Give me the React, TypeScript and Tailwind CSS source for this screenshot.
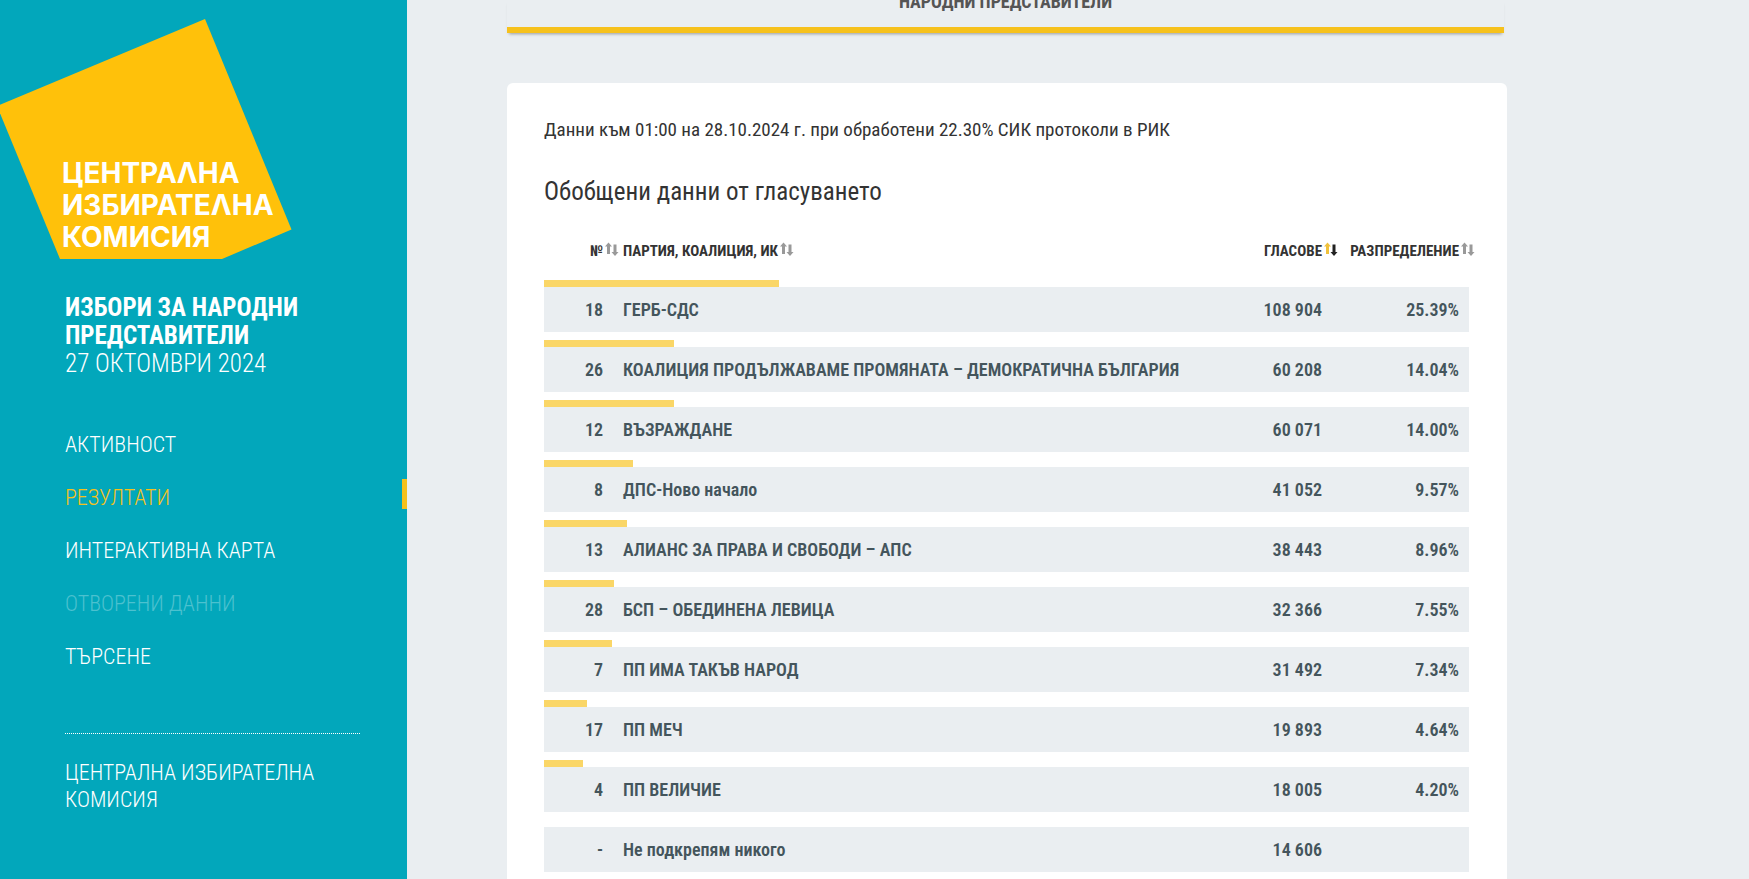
import clsx from "clsx";

type Party = {
  no: string;
  name: string;
  votes: string;
  share: number | null;
};

const PARTIES: Party[] = [
  { no: "18", name: "ГЕРБ-СДС", votes: "108 904", share: 25.39 },
  { no: "26", name: "КОАЛИЦИЯ ПРОДЪЛЖАВАМЕ ПРОМЯНАТА – ДЕМОКРАТИЧНА БЪЛГАРИЯ", votes: "60 208", share: 14.04 },
  { no: "12", name: "ВЪЗРАЖДАНЕ", votes: "60 071", share: 14.0 },
  { no: "8", name: "ДПС-Ново начало", votes: "41 052", share: 9.57 },
  { no: "13", name: "АЛИАНС ЗА ПРАВА И СВОБОДИ – АПС", votes: "38 443", share: 8.96 },
  { no: "28", name: "БСП – ОБЕДИНЕНА ЛЕВИЦА", votes: "32 366", share: 7.55 },
  { no: "7", name: "ПП ИМА ТАКЪВ НАРОД", votes: "31 492", share: 7.34 },
  { no: "17", name: "ПП МЕЧ", votes: "19 893", share: 4.64 },
  { no: "4", name: "ПП ВЕЛИЧИЕ", votes: "18 005", share: 4.2 },
  { no: "-", name: "Не подкрепям никого", votes: "14 606", share: null },
];

const NAV = [
  { label: "АКТИВНОСТ" },
  { label: "РЕЗУЛТАТИ", active: true },
  { label: "ИНТЕРАКТИВНА КАРТА" },
  { label: "ОТВОРЕНИ ДАННИ", disabled: true },
  { label: "ТЪРСЕНЕ" },
];

export default function App() {
  return (
    <div className="flex min-h-screen bg-[#eaeef1] font-['Roboto_Condensed','Liberation_Sans_Narrow',Roboto,sans-serif] text-[#333333]">
      <Sidebar />
      <main className="flex min-w-0 flex-1 flex-col px-[100px]">
        <div className="flex w-full max-w-[997px] flex-col">
          <div className="flex h-[33px] flex-col justify-end border-b-[6px] border-[#f6c11c] pb-[15px] text-center text-[18px] leading-5 font-bold text-[#555555] shadow-[0_3px_3px_-2px_rgba(0,0,0,0.35)]">
            НАРОДНИ ПРЕДСТАВИТЕЛИ
          </div>
        </div>
        <section className="mt-[50px] w-full max-w-[1000px] flex-1 rounded-t-md bg-white pt-8 pr-[38px] pl-[37px]">
          <p className="text-[19px] leading-[30px]">
            Данни към 01:00 на 28.10.2024 г. при обработени 22.30% СИК протоколи в РИК
          </p>
          <h2 className="mt-8 text-[25px] leading-[30px]">Обобщени данни от гласуването</h2>
          <ResultsTable />
        </section>
      </main>
    </div>
  );
}

function Sidebar() {
  return (
    <aside className="w-[407px] shrink-0 bg-[#02a7bb] text-white">
      <Logo />
      <div className="mt-[34px] px-[65px] text-[25px] leading-7">
        <h1 className="font-bold">
          ИЗБОРИ ЗА НАРОДНИ
          <br />
          ПРЕДСТАВИТЕЛИ
        </h1>
        <p className="font-light">27 ОКТОМВРИ 2024</p>
      </div>
      <nav className="mt-12 flex flex-col gap-[23px] text-[22px] leading-[22px]">
        {NAV.map((item) => (
          <a
            key={item.label}
            href="#"
            aria-disabled={item.disabled}
            className={clsx(
              "border-r-[5px] pt-2 pl-[65px] font-light",
              item.active ? "border-[#f6c11c] text-[#f6c11c]" : "border-transparent",
              item.disabled && "text-[#4cc1cf]",
            )}
          >
            {item.label}
          </a>
        ))}
      </nav>
      <div className="mx-[65px] mt-[65px] w-[295px] border-t border-dotted border-white pt-[25px]">
        <a href="#" className="block text-[22px] leading-[27px] font-light">
          ЦЕНТРАЛНА ИЗБИРАТЕЛНА КОМИСИЯ
        </a>
      </div>
    </aside>
  );
}

function Logo() {
  return (
    <a href="#" className="block">
      <svg viewBox="0 0 300 260" className="block h-[260px] w-[300px]" role="img">
        <polygon points="205,19 291.5,229.5 222,259 60,259 -3,106" fill="#ffc10a" />
        <g fill="#fff" fontFamily="Inter, sans-serif" fontWeight="700" fontSize="28">
          <text x="62" y="183">ЦЕНТРАΛНА</text>
          <text x="62" y="215">ИЗБИРАТЕΛНА</text>
          <text x="62" y="247">КОМИСИЯ</text>
        </g>
      </svg>
    </a>
  );
}

function ResultsTable() {
  return (
    <table className="mt-[23px] w-full table-fixed border-collapse text-[18px] leading-5">
      <colgroup>
        <col className="w-[69px]" />
        <col />
        <col className="w-[120px]" />
        <col className="w-[137px]" />
      </colgroup>
      <thead>
        <tr className="h-[42px] text-[15px]">
          <SortHeader label="№" right />
          <SortHeader label="ПАРТИЯ, КОАЛИЦИЯ, ИК" />
          <SortHeader label="ГЛАСОВЕ" right sorted />
          <SortHeader label="РАЗПРЕДЕЛЕНИЕ" right />
        </tr>
      </thead>
      {PARTIES.map((p) => (
        <tbody key={p.no} className="font-semibold text-[#44555c]">
          <tr>
            <td colSpan={4} className="h-[15px] p-0 align-bottom">
              {p.share !== null && <div className="h-[7px] bg-[#fad667]" style={{ width: `${p.share}%` }} />}
            </td>
          </tr>
          <tr className="h-[45px] bg-[#eaeef1]">
            <td className="px-[10px] text-right">{p.no}</td>
            <td className="px-[10px]">{p.name}</td>
            <td className="px-[10px] text-right">{p.votes}</td>
            <td className="px-[10px] text-right">{p.share !== null && `${p.share.toFixed(2)}%`}</td>
          </tr>
        </tbody>
      ))}
    </table>
  );
}

function SortHeader({ label, right, sorted }: { label: string; right?: boolean; sorted?: boolean }) {
  return (
    <th className="px-[10px]" aria-sort={sorted ? "descending" : undefined}>
      <button className={clsx("relative block font-bold whitespace-nowrap", right && "ml-auto")}>
        {label}
        <SortIcon up={sorted ? "#f0c23c" : "#999999"} down={sorted ? "#222222" : "#999999"} />
      </button>
    </th>
  );
}

// hangs outside the label so the text stays flush with the column
function SortIcon({ up, down }: { up: string; down: string }) {
  return (
    <svg viewBox="0 0 16 16" className="absolute top-0 left-full size-4" aria-hidden>
      <path d="M5.500 1.500 2 5.500h2V13h3V5.500h2z" fill={up} />
      <path d="M10.500 3.500h3V11h2L12 15 8.500 11h2z" fill={down} />
    </svg>
  );
}
